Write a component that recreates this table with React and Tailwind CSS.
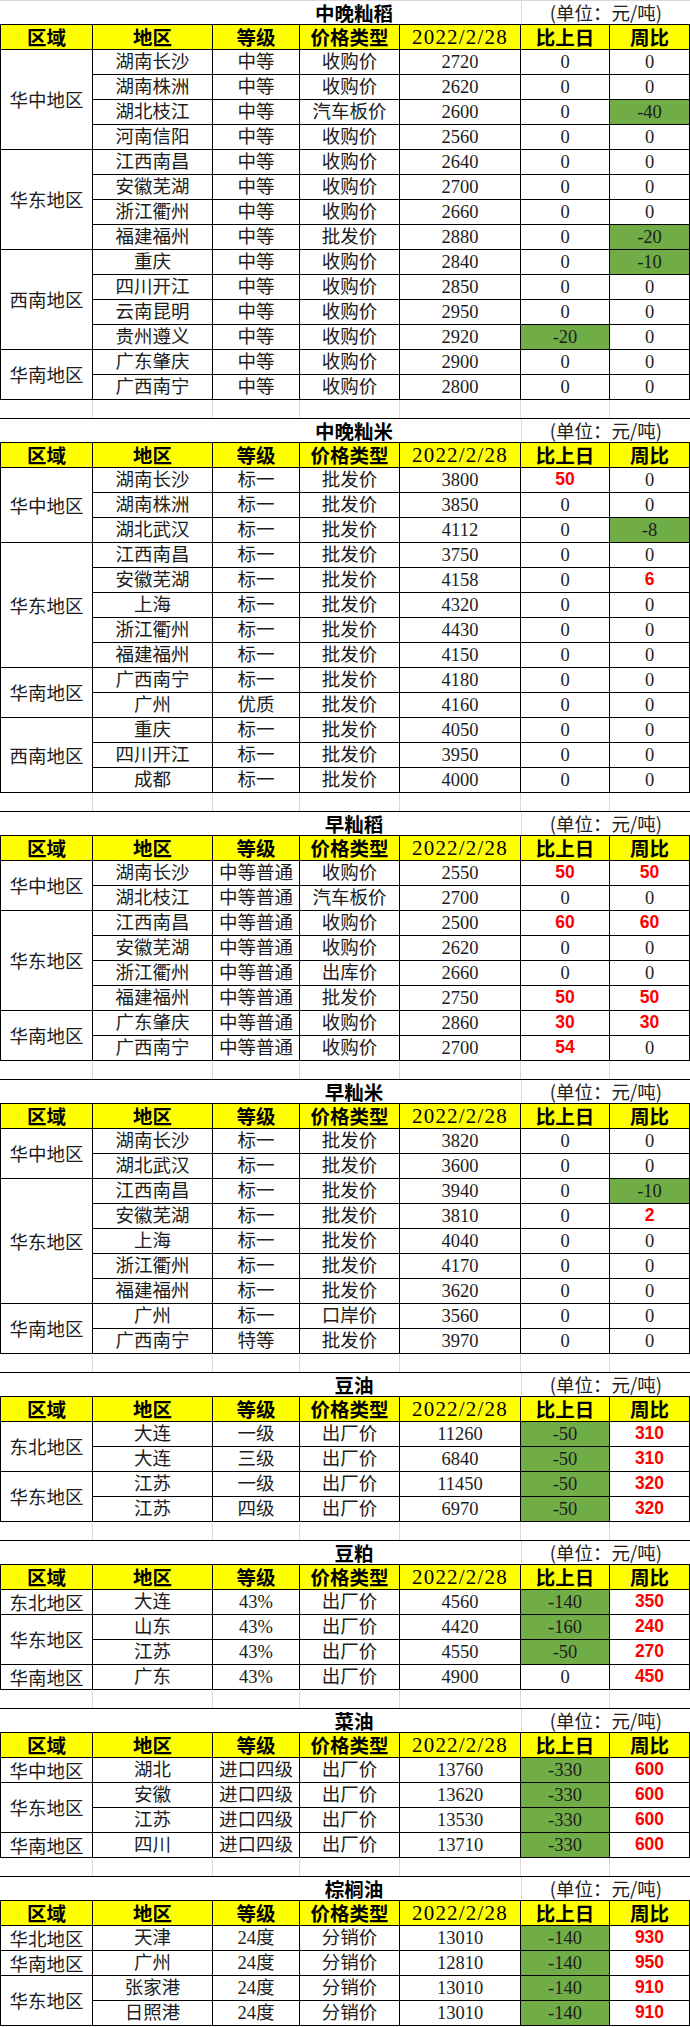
import React from 'react';

const GRID = 'grid grid-cols-[93px_120px_87px_100px_121px_89px_80px] auto-rows-[25px]';
const SPAN = { 1: 'row-span-1', 2: 'row-span-2', 3: 'row-span-3', 4: 'row-span-4', 5: 'row-span-5' };
const HEAD = ['区域', '地区', '等级', '价格类型', '2022/2/28', '比上日', '周比'];

const TABLES = [
  {
    title: '中晚籼稻',
    groups: [
      { region: '华中地区', rows: [
        ['湖南长沙', '中等', '收购价', '2720', '0', '0'],
        ['湖南株洲', '中等', '收购价', '2620', '0', '0'],
        ['湖北枝江', '中等', '汽车板价', '2600', '0', 'g-40'],
        ['河南信阳', '中等', '收购价', '2560', '0', '0'],
      ] },
      { region: '华东地区', rows: [
        ['江西南昌', '中等', '收购价', '2640', '0', '0'],
        ['安徽芜湖', '中等', '收购价', '2700', '0', '0'],
        ['浙江衢州', '中等', '收购价', '2660', '0', '0'],
        ['福建福州', '中等', '批发价', '2880', '0', 'g-20'],
      ] },
      { region: '西南地区', rows: [
        ['重庆', '中等', '收购价', '2840', '0', 'g-10'],
        ['四川开江', '中等', '收购价', '2850', '0', '0'],
        ['云南昆明', '中等', '收购价', '2950', '0', '0'],
        ['贵州遵义', '中等', '收购价', '2920', 'g-20', '0'],
      ] },
      { region: '华南地区', rows: [
        ['广东肇庆', '中等', '收购价', '2900', '0', '0'],
        ['广西南宁', '中等', '收购价', '2800', '0', '0'],
      ] },
    ],
  },
  {
    title: '中晚籼米',
    groups: [
      { region: '华中地区', rows: [
        ['湖南长沙', '标一', '批发价', '3800', 'r50', '0'],
        ['湖南株洲', '标一', '批发价', '3850', '0', '0'],
        ['湖北武汉', '标一', '批发价', '4112', '0', 'g-8'],
      ] },
      { region: '华东地区', rows: [
        ['江西南昌', '标一', '批发价', '3750', '0', '0'],
        ['安徽芜湖', '标一', '批发价', '4158', '0', 'r6'],
        ['上海', '标一', '批发价', '4320', '0', '0'],
        ['浙江衢州', '标一', '批发价', '4430', '0', '0'],
        ['福建福州', '标一', '批发价', '4150', '0', '0'],
      ] },
      { region: '华南地区', rows: [
        ['广西南宁', '标一', '批发价', '4180', '0', '0'],
        ['广州', '优质', '批发价', '4160', '0', '0'],
      ] },
      { region: '西南地区', rows: [
        ['重庆', '标一', '批发价', '4050', '0', '0'],
        ['四川开江', '标一', '批发价', '3950', '0', '0'],
        ['成都', '标一', '批发价', '4000', '0', '0'],
      ] },
    ],
  },
  {
    title: '早籼稻',
    groups: [
      { region: '华中地区', rows: [
        ['湖南长沙', '中等普通', '收购价', '2550', 'r50', 'r50'],
        ['湖北枝江', '中等普通', '汽车板价', '2700', '0', '0'],
      ] },
      { region: '华东地区', rows: [
        ['江西南昌', '中等普通', '收购价', '2500', 'r60', 'r60'],
        ['安徽芜湖', '中等普通', '收购价', '2620', '0', '0'],
        ['浙江衢州', '中等普通', '出库价', '2660', '0', '0'],
        ['福建福州', '中等普通', '批发价', '2750', 'r50', 'r50'],
      ] },
      { region: '华南地区', rows: [
        ['广东肇庆', '中等普通', '收购价', '2860', 'r30', 'r30'],
        ['广西南宁', '中等普通', '收购价', '2700', 'r54', '0'],
      ] },
    ],
  },
  {
    title: '早籼米',
    groups: [
      { region: '华中地区', rows: [
        ['湖南长沙', '标一', '批发价', '3820', '0', '0'],
        ['湖北武汉', '标一', '批发价', '3600', '0', '0'],
      ] },
      { region: '华东地区', rows: [
        ['江西南昌', '标一', '批发价', '3940', '0', 'g-10'],
        ['安徽芜湖', '标一', '批发价', '3810', '0', 'r2'],
        ['上海', '标一', '批发价', '4040', '0', '0'],
        ['浙江衢州', '标一', '批发价', '4170', '0', '0'],
        ['福建福州', '标一', '批发价', '3620', '0', '0'],
      ] },
      { region: '华南地区', rows: [
        ['广州', '标一', '口岸价', '3560', '0', '0'],
        ['广西南宁', '特等', '批发价', '3970', '0', '0'],
      ] },
    ],
  },
  {
    title: '豆油',
    groups: [
      { region: '东北地区', rows: [
        ['大连', '一级', '出厂价', '11260', 'g-50', 'r310'],
        ['大连', '三级', '出厂价', '6840', 'g-50', 'r310'],
      ] },
      { region: '华东地区', rows: [
        ['江苏', '一级', '出厂价', '11450', 'g-50', 'r320'],
        ['江苏', '四级', '出厂价', '6970', 'g-50', 'r320'],
      ] },
    ],
  },
  {
    title: '豆粕',
    groups: [
      { region: '东北地区', rows: [['大连', '43%', '出厂价', '4560', 'g-140', 'r350']] },
      { region: '华东地区', rows: [
        ['山东', '43%', '出厂价', '4420', 'g-160', 'r240'],
        ['江苏', '43%', '出厂价', '4550', 'g-50', 'r270'],
      ] },
      { region: '华南地区', rows: [['广东', '43%', '出厂价', '4900', '0', 'r450']] },
    ],
  },
  {
    title: '菜油',
    groups: [
      { region: '华中地区', rows: [['湖北', '进口四级', '出厂价', '13760', 'g-330', 'r600']] },
      { region: '华东地区', rows: [
        ['安徽', '进口四级', '出厂价', '13620', 'g-330', 'r600'],
        ['江苏', '进口四级', '出厂价', '13530', 'g-330', 'r600'],
      ] },
      { region: '华南地区', rows: [['四川', '进口四级', '出厂价', '13710', 'g-330', 'r600']] },
    ],
  },
  {
    title: '棕榈油',
    groups: [
      { region: '华北地区', rows: [['天津', '24度', '分销价', '13010', 'g-140', 'r930']] },
      { region: '华南地区', rows: [['广州', '24度', '分销价', '12810', 'g-140', 'r950']] },
      { region: '华东地区', rows: [
        ['张家港', '24度', '分销价', '13010', 'g-140', 'r910'],
        ['日照港', '24度', '分销价', '13010', 'g-140', 'r910'],
      ] },
    ],
  },
];

const SERIF = "font-['Liberation_Serif','Noto_Sans_CJK_SC',serif]";
const CJK = "font-['Noto_Sans_CJK_SC','Liberation_Sans',sans-serif]";

function Cell({ value }) {
  let bg = '';
  let text = value;
  let cls = `${SERIF} text-[18.5px] text-[#1c1c1c]`;
  if (value.startsWith('g')) {
    bg = 'bg-[#70ad47]';
    text = value.slice(1);
  } else if (value.startsWith('r')) {
    text = value.slice(1);
    cls = "font-['Liberation_Sans',sans-serif] font-bold text-[17.5px] text-[#ff0000]";
  }
  return (
    <div className={`flex items-center justify-center border-r border-b border-black leading-none ${bg}`}>
      <span className={cls}>{text}</span>
    </div>
  );
}

function PriceTable({ title, groups, first }) {
  return (
    <div>
      {!first && (
        <div className="grid grid-cols-[93px_120px_87px_100px_121px_89px_80px] h-[18px]">
          {HEAD.map((h, i) => (
            <div key={h} className={i < 6 ? 'border-r border-[#d9d9d9]' : ''} />
          ))}
        </div>
      )}

      {/* title row */}
      <div className={`flex h-[25px] border-b border-black border-t ${first ? 'border-t-[#d9d9d9]' : 'border-t-black'}`}>
        <div className={`w-[521px] flex items-center justify-center pl-[187px] ${CJK} font-bold text-[19.5px] text-black leading-none`}>
          {title}
        </div>
        <div className={`w-[169px] flex items-center justify-center border-l border-[#d9d9d9] ${CJK} text-[18.5px] text-[#222] leading-none`}>
          (单位：元/吨)
        </div>
      </div>

      <div className={GRID}>
        {HEAD.map((h, i) => (
          <div
            key={h}
            className={`flex items-center justify-center bg-[#ffff00] border-r border-b border-black leading-none ${i === 0 ? 'border-l' : ''}`}
          >
            {i === 4 ? (
              <span className="font-['Liberation_Serif',serif] text-[21px] tracking-[1.2px] text-black">{h}</span>
            ) : (
              <span className={`${CJK} font-bold text-[19.5px] text-black`}>{h}</span>
            )}
          </div>
        ))}

        {groups.map((g) => (
          <React.Fragment key={g.region + g.rows[0][0]}>
            <div className={`${SPAN[g.rows.length]} flex items-center justify-center border-l border-r border-b border-black`}>
              <span className={`${CJK} text-[18.5px] text-[#1c1c1c] leading-none`}>{g.region}</span>
            </div>
            {g.rows.map((r, ri) =>
              r.map((v, ci) => <Cell key={`${ri}-${ci}`} value={v} />)
            )}
          </React.Fragment>
        ))}
      </div>
    </div>
  );
}

export default function App() {
  return (
    <div className="w-[690px] bg-white">
      {TABLES.map((t, i) => (
        <PriceTable key={t.title} title={t.title} groups={t.groups} first={i === 0} />
      ))}
    </div>
  );
}
